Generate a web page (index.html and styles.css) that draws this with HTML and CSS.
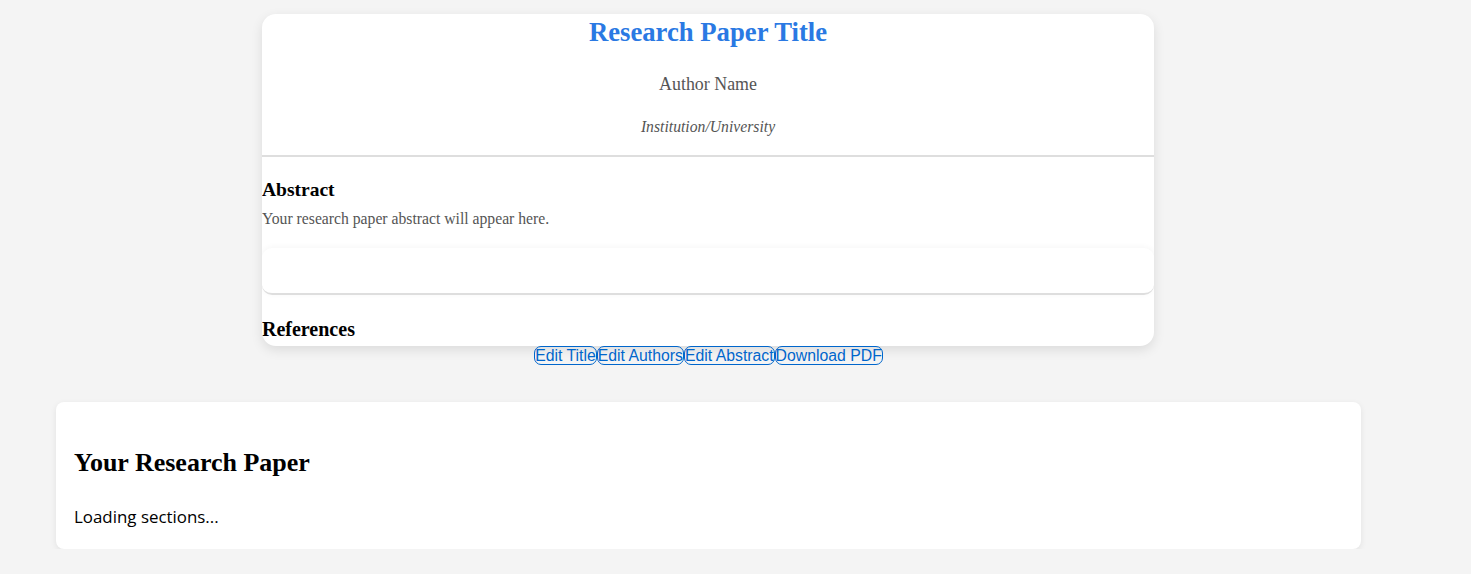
FILE: index.html
```html
<!DOCTYPE html>
<html lang="en">
<head>
<meta charset="utf-8">
<title>Research Paper</title>
<link rel="stylesheet" href="styles.css">
</head>
<body>
<div class="page">
  <div class="paper">
    <header class="paper-header">
      <h1 class="paper-title">Research Paper Title</h1>
      <p class="paper-author">Author Name</p>
      <p class="paper-inst">Institution/University</p>
    </header>
    <section class="paper-section abstract">
      <h2 class="section-title">Abstract</h2>
      <p class="section-text">Your research paper abstract will appear here.</p>
    </section>
    <section class="empty-section"></section>
    <section class="paper-section refs">
      <h2 class="section-title">References</h2>
    </section>
  </div>
  <div class="controls"><button class="ctl">Edit Title</button><button class="ctl">Edit Authors</button><button class="ctl">Edit Abstract</button><button class="ctl">Download PDF</button></div>
  <div class="panel">
    <h2 class="panel-title">Your Research Paper</h2>
    <p class="panel-text">Loading sections...</p>
  </div>
</div>
</body>
</html>
```

FILE: styles.css
```css
html, body {
  margin: 0;
  padding: 0;
  background: #f4f4f4;
}
body {
  font-family: "Liberation Serif", "DejaVu Serif", serif;
}
.page {
  width: 1417px;
  padding-top: 14px;
}
.paper {
  width: 892px;
  height: 332px;
  margin: 0 0 0 262px;
  background: #fff;
  border-radius: 14px;
  box-shadow: 0 4px 12px rgba(0, 0, 0, 0.1);
  overflow: hidden;
}
.paper-header {
  text-align: center;
  border-bottom: 2px solid #dedede;
  padding-bottom: 19px;
}
.paper-title {
  margin: 0;
  font-size: 26.7px;
  line-height: 36px;
  font-weight: bold;
  color: #2a79e3;
}
.paper-author {
  margin: 24px 0 0;
  font-size: 17.9px;
  line-height: 20px;
  color: #555;
}
.paper-inst {
  margin: 24px 0 0;
  font-size: 15.7px;
  line-height: 18px;
  font-style: italic;
  color: #555;
}
.abstract {
  padding-bottom: 20px;
}
.section-title {
  margin: 22px 0 0;
  font-size: 19.5px;
  line-height: 22px;
  font-weight: bold;
  color: #000;
}
.section-text {
  margin: 9px 0 0;
  font-size: 15.7px;
  line-height: 18px;
  color: #555;
}
.empty-section {
  height: 45px;
  border-radius: 10px;
  background: #fff;
  box-shadow: 0 -1px 6px rgba(0, 0, 0, 0.04);
  border-bottom: 2px solid #dedede;
}
.refs .section-title {
  margin-top: 23px;
  font-size: 20px;
}
.controls {
  display: flex;
  justify-content: center;
}
.ctl {
  font-family: "Liberation Sans", Arial, sans-serif;
  font-size: 15.8px;
  line-height: 17px;
  padding: 0;
  margin: 0;
  color: #0066cc;
  background: transparent;
  border: 1px solid #0066cc;
  border-radius: 7px;
  cursor: pointer;
}
.panel {
  margin: 37px 56px 0;
  background: #fff;
  border-radius: 8px;
  box-shadow: 0 2px 6px rgba(0, 0, 0, 0.08);
  padding: 20px 18px;
}
.panel-title {
  margin: 26px 0 0;
  font-size: 26px;
  line-height: 30px;
  font-weight: bold;
  color: #000;
}
.panel-text {
  margin: 27px 0 0;
  font-family: "Open Sans", "Noto Sans", sans-serif;
  font-size: 16.9px;
  line-height: 24px;
  color: #000;
}
```
